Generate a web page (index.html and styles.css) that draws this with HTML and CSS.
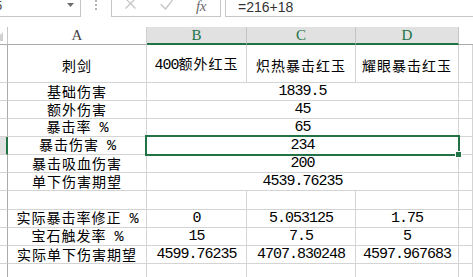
FILE: index.html
```html
<!DOCTYPE html>
<html lang="zh">
<head>
<meta charset="utf-8">
<title>Sheet</title>
<link rel="stylesheet" href="styles.css">
</head>
<body>
<div class="app">
  <div class="fbar">
    <div class="namebox">
      <span class="nb-text">5</span>
      <svg class="dd" width="7" height="4" viewBox="0 0 7 4"><polygon points="0,0 7,0 3.5,4" fill="#6d6d6d"/></svg>
    </div>
    <div class="grip">
      <svg width="2" height="10" viewBox="0 0 2 10"><rect x="0" y="0" width="2" height="2" fill="#b4b4b4"/><rect x="0" y="4" width="2" height="2" fill="#b4b4b4"/><rect x="0" y="8" width="2" height="2" fill="#b4b4b4"/></svg>
    </div>
    <div class="fbtns">
      <svg class="ico" width="13" height="13" viewBox="0 0 13 13"><path d="M1.5 1.5 L11.5 11.5 M11.5 1.5 L1.5 11.5" stroke="#c4c4c4" stroke-width="1.3" fill="none"/></svg>
      <svg class="ico ck" width="13" height="13" viewBox="0 0 13 13"><path d="M0.8 7.2 L5.5 12 L12.6 3" stroke="#c4c4c4" stroke-width="1.4" fill="none"/></svg>
      <span class="fx">fx</span>
    </div>
    <div class="sp"></div>
    <div class="finput">=216+18</div>
  </div>

  <div class="sheet">
    <div class="corner"><svg width="8" height="17" viewBox="0 0 8 17"><polygon points="-6,14 3,14 3,5" fill="#d0d0d0"/></svg></div>
    <div class="ch">A</div>
    <div class="ch on">B</div>
    <div class="ch on">C</div>
    <div class="ch on">D</div>
    <div class="ch e"></div>

    <div class="rh"></div>
    <div class="c r1"><span class="t">刺剑</span></div>
    <div class="c r1"><span class="t"><span class="n">400</span>额外红玉</span></div>
    <div class="c r1"><span class="t">炽热暴击红玉</span></div>
    <div class="c r1"><span class="t">耀眼暴击红玉</span></div>
    <div class="c"></div>

    <div class="rh"></div>
    <div class="c"><span class="t">基础伤害</span></div>
    <div class="c m n">1839.5</div>
    <div class="c"></div>

    <div class="rh"></div>
    <div class="c"><span class="t">额外伤害</span></div>
    <div class="c m n">45</div>
    <div class="c"></div>

    <div class="rh"></div>
    <div class="c"><span class="t">暴击率<span class="n"> %</span></span></div>
    <div class="c m n">65</div>
    <div class="c"></div>

    <div class="rh on"></div>
    <div class="c"><span class="t">暴击伤害<span class="n"> %</span></span></div>
    <div class="c m n">234</div>
    <div class="c"></div>

    <div class="rh"></div>
    <div class="c"><span class="t">暴击吸血伤害</span></div>
    <div class="c m n">200</div>
    <div class="c"></div>

    <div class="rh"></div>
    <div class="c"><span class="t">单下伤害期望</span></div>
    <div class="c m n">4539.76235</div>
    <div class="c"></div>

    <div class="rh"></div>
    <div class="c"></div>
    <div class="c"></div>
    <div class="c"></div>
    <div class="c"></div>
    <div class="c"></div>

    <div class="rh"></div>
    <div class="c"><span class="t">实际暴击率修正<span class="n"> %</span></span></div>
    <div class="c n">0</div>
    <div class="c n">5.053125</div>
    <div class="c n">1.75</div>
    <div class="c"></div>

    <div class="rh"></div>
    <div class="c"><span class="t">宝石触发率<span class="n"> %</span></span></div>
    <div class="c n">15</div>
    <div class="c n">7.5</div>
    <div class="c n">5</div>
    <div class="c"></div>

    <div class="rh"></div>
    <div class="c"><span class="t">实际单下伤害期望</span></div>
    <div class="c n">4599.76235</div>
    <div class="c n">4707.830248</div>
    <div class="c n">4597.967683</div>
    <div class="c"></div>

    <div class="rh"></div>
    <div class="c"></div>
    <div class="c"></div>
    <div class="c"></div>
    <div class="c"></div>
    <div class="c"></div>

    <div class="sel"></div>
    <div class="handle"></div>
  </div>
</div>
</body>
</html>
```

FILE: styles.css
```css
* { box-sizing: border-box; }

html, body {
  margin: 0;
  padding: 0;
  background: #ffffff;
}

.app {
  width: 473px;
  height: 277px;
  overflow: hidden;
  position: relative;
  background: #ffffff;
}

/* formula bar */
.fbar {
  display: flex;
  height: 17px;
}

.namebox {
  width: 81px;
  border-right: 1px solid #c6c6c6;
  border-bottom: 1px solid #c6c6c6;
  display: flex;
  justify-content: space-between;
  align-items: flex-start;
  overflow: hidden;
  padding-right: 6px;
}

.nb-text {
  font-family: "Liberation Sans", sans-serif;
  font-size: 13px;
  line-height: 12px;
  color: #444;
  margin-left: -5px;
}

.dd {
  margin-top: 3px;
  display: block;
}

.grip {
  width: 30px;
  padding-left: 14px;
  display: flex;
  align-items: flex-start;
}

.grip svg { display: block; }

.fbtns {
  width: 110px;
  border-left: 1px solid #c6c6c6;
  border-right: 1px solid #c6c6c6;
  border-bottom: 1px solid #c6c6c6;
  display: flex;
  align-items: flex-start;
  padding-left: 12px;
}

.ico {
  display: block;
  margin-top: -3px;
}

.ck, .fx { margin-left: 23px; }

.fx {
  font-family: "Liberation Serif", serif;
  font-style: italic;
  font-size: 15px;
  line-height: 13px;
  color: #6b6b6b;
  letter-spacing: -0.5px;
}

.sp { width: 4px; }

.finput {
  flex: 1;
  border-left: 1px solid #c6c6c6;
  border-bottom: 1px solid #c6c6c6;
  padding-left: 12px;
  font-family: "Liberation Sans", sans-serif;
  font-size: 14px;
  line-height: 14px;
  color: #333;
  white-space: nowrap;
}

/* sheet grid */
.sheet {
  margin-top: 10px;
  position: relative;
  display: grid;
  grid-template-columns: 8px 139px 100px 109px 103px 1fr;
  grid-template-rows: 18px 38px repeat(6, 18px) 19px repeat(3, 18px) 18px;
}

.corner {
  border-right: 1px solid #c6c6c6;
  border-bottom: 1px solid #ababab;
  overflow: hidden;
}

.corner svg { display: block; }

.ch {
  border-right: 1px solid #d0d0d0;
  border-bottom: 1px solid #ababab;
  display: flex;
  align-items: center;
  justify-content: center;
  font-family: "Liberation Serif", serif;
  font-size: 15px;
  line-height: 17px;
  color: #444;
}

.ch.on {
  background: #e1e1e1;
  border-right-color: #c4c4c4;
  border-bottom: 2px solid #217346;
  color: #217346;
}

.ch.e { border-right: none; }

.rh {
  border-right: 1px solid #ababab;
  border-bottom: 1px solid #d4d4d4;
}

.rh.on {
  background: #e1e1e1;
  border-right: 2px solid #217346;
}

.c {
  border-right: 1px solid #d4d4d4;
  border-bottom: 1px solid #d4d4d4;
  display: flex;
  align-items: center;
  justify-content: center;
  padding-bottom: 1px;
  font-family: "Noto Sans CJK SC", sans-serif;
  font-size: 14px;
  letter-spacing: 1px;
  line-height: 16px;
  color: #000;
  white-space: nowrap;
  overflow: hidden;
}

.c.r1 { padding-top: 2px; padding-bottom: 0; }

.c.m { grid-column: 3 / 6; }

.t { white-space: pre; }

.n {
  font-family: "Liberation Mono", monospace;
  font-size: 15px;
  letter-spacing: -1px;
  white-space: pre;
}

.c.n { padding-bottom: 0; }

/* selection overlay */
.sel {
  position: absolute;
  left: 145px;
  top: 108px;
  width: 315px;
  height: 21px;
  border: 2px solid #217346;
  pointer-events: none;
}

.handle {
  position: absolute;
  left: 456px;
  top: 125px;
  width: 5px;
  height: 5px;
  background: #217346;
  box-shadow: 0 0 0 1px #ffffff;
}
```
